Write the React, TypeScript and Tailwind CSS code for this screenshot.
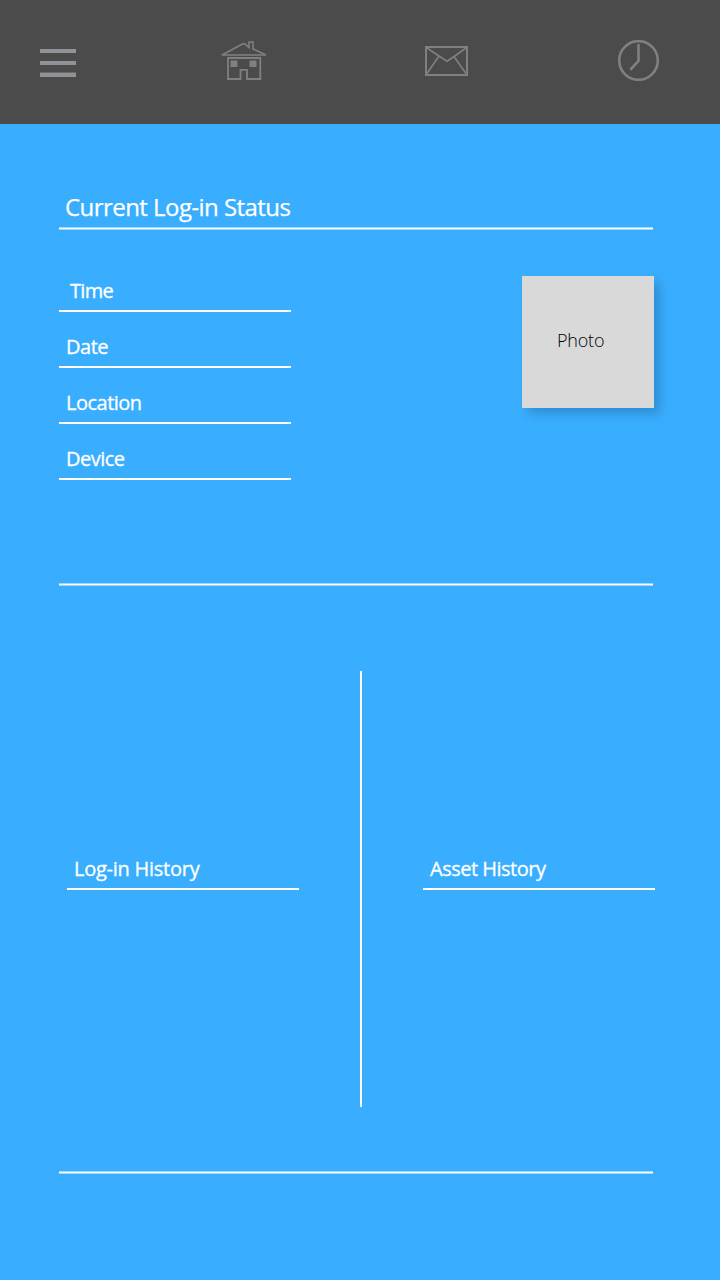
const fontStack = "font-['Open_Sans','Noto_Sans',sans-serif]";

function MenuIcon() {
  return (
    <svg width="36" height="29" viewBox="0 0 36 29" shapeRendering="crispEdges" aria-hidden="true">
      <rect x="0" y="0" width="36" height="4" fill="#909498" />
      <rect x="0" y="12" width="36" height="4" fill="#909498" />
      <rect x="0" y="23" width="36" height="1" fill="#6c6b6d" />
      <rect x="0" y="24" width="36" height="4" fill="#929195" />
    </svg>
  );
}

function HomeIcon() {
  return (
    <svg width="46" height="42" viewBox="0 0 46 42" fill="none" stroke="#808080" strokeWidth="2" aria-hidden="true">
      <path d="M0.5 15H45" strokeWidth="1.5" />
      <path d="M2 14.5L20.5 4.5L22 3.8H24L28 7.5V2H32V9L44 14.5" strokeWidth="1.6" />
      <path d="M7 18H39.3V39H26V29.8H19.5V39H7Z" strokeWidth="1.8" />
      <path d="M9.5 20.5H16.5V27H9.5ZM28.5 20.5H35.5V27H28.5Z" fill="#808080" stroke="none" />
    </svg>
  );
}

function MailIcon() {
  return (
    <svg width="43" height="30" viewBox="0 0 43 30" fill="none" stroke="#808080" strokeWidth="2" aria-hidden="true">
      <path d="M1 1H42V29H1Z" />
      <path d="M2 2L14 10L22 15.2L29 10.5L41 2M14 10L2 27.5M29 10.5L41 27.5" strokeWidth="1.6" />
    </svg>
  );
}

function ClockIcon() {
  return (
    <svg width="42" height="42" viewBox="0 0 42 42" fill="none" stroke="#808080" aria-hidden="true">
      <circle cx="20.5" cy="20.5" r="19.3" strokeWidth="2.6" />
      <path d="M20.5 5V21L13 29" strokeWidth="2.6" strokeLinecap="round" />
    </svg>
  );
}

function Rule() {
  return (
    <div className="flex h-[3px] w-[594px] flex-col">
      <div className="h-px bg-[#9cd7ff]" />
      <div className="h-px bg-white" />
      <div className="h-px bg-[#9cd7ff]" />
    </div>
  );
}

function Field({ label, inset = "pl-[7px]", tracking = "tracking-[-0.5px]" }: { label: string; inset?: string; tracking?: string }) {
  return (
    <div className={`flex h-[32px] w-[232px] items-start border-b-2 border-white text-[20px] leading-[22px] [-webkit-text-stroke:0.3px_white] ${inset} ${tracking}`}>
      {label}
    </div>
  );
}

export default function App() {
  return (
    <div className={`flex h-[1280px] w-[720px] flex-col overflow-hidden bg-[#39aeff] text-white ${fontStack}`}>
      <header className="flex h-[124px] shrink-0 items-start bg-[#4b4b4b] pl-[40px]">
        <button className="mt-[49px]" aria-label="Menu"><MenuIcon /></button>
        <button className="mt-[40px] ml-[145px]" aria-label="Home"><HomeIcon /></button>
        <button className="mt-[46px] ml-[158px]" aria-label="Messages"><MailIcon /></button>
        <button className="mt-[40px] ml-[150px]" aria-label="History"><ClockIcon /></button>
      </header>
      <main className="flex flex-col pl-[59px]">
        <h1 className="mt-[67px] h-[36px] pl-[6px] text-[24px] leading-[31px] tracking-[-0.55px] whitespace-nowrap [-webkit-text-stroke:0.25px_white]">Current Log-in Status</h1>
        <Rule />
        <section className="mt-[46px] flex h-[307px] w-[595px] justify-between">
          <div className="flex flex-col gap-6 pt-[4px]">
            <Field label="Time" inset="pl-[11px]" tracking="tracking-[-0.7px]" />
            <Field label="Date" />
            <Field label="Location" />
            <Field label="Device" />
          </div>
          <div className="h-[132px] w-[132px] bg-[#d9d9d9] pt-[52px] pl-[35px] text-[18px] leading-[24px] font-[350] tracking-[-0.2px] text-black shadow-[6px_6px_10px_rgba(0,0,0,0.18)]">
            Photo
          </div>
        </section>
        <Rule />
        <section className="mt-[85px] flex h-[436px] items-start">
          <div className="w-[301px] pt-[187px] pl-[8px]">
            <Field label="Log-in History" tracking="tracking-[-0.25px]" />
          </div>
          <div className="h-full w-[2px] bg-white" />
          <div className="pt-[187px] pl-[61px]">
            <Field label="Asset History" />
          </div>
        </section>
        <div className="mt-[64px]"><Rule /></div>
      </main>
    </div>
  );
}
